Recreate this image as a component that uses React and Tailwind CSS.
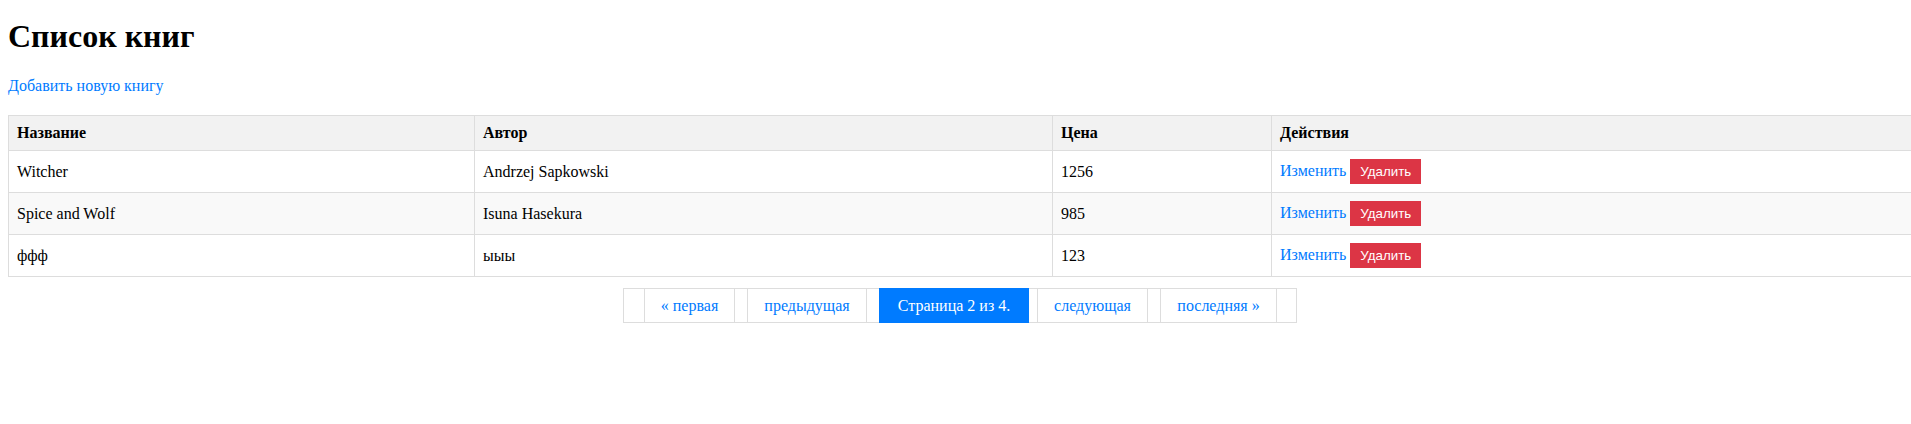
import React from "react"

const books = [
  { id: 1, title: "Witcher", author: "Andrzej Sapkowski", price: 1256 },
  { id: 2, title: "Spice and Wolf", author: "Isuna Hasekura", price: 985 },
  { id: 3, title: "ффф", author: "ыыы", price: 123 },
]

export default function App() {
  return (
    <div className="min-h-screen overflow-hidden bg-white text-black font-['Liberation_Serif','Times_New_Roman',serif] text-[16px] leading-[normal]">
      <div className="pl-2 pt-[18px]">
        <h1 className="text-[32px] font-bold leading-[normal] mb-[22px]">Список книг</h1>
        <div>
          <a href="#" className="text-[#007bff]">Добавить новую книгу</a>
        </div>

        {/* Books table */}
        <table className="mt-[20px] w-[1910px] table-fixed border-collapse">
          <colgroup>
            <col className="w-[466px]" />
            <col className="w-[578px]" />
            <col className="w-[219px]" />
            <col />
          </colgroup>
          <thead>
            <tr className="bg-[#f2f2f2]">
              <th className="border border-[#ddd] p-2 text-left font-bold">Название</th>
              <th className="border border-[#ddd] p-2 text-left font-bold">Автор</th>
              <th className="border border-[#ddd] p-2 text-left font-bold">Цена</th>
              <th className="border border-[#ddd] p-2 text-left font-bold">Действия</th>
            </tr>
          </thead>
          <tbody>
            {books.map((book, i) => (
              <tr key={book.id} className={i % 2 === 1 ? "bg-[#f9f9f9]" : "bg-white"}>
                <td className="border border-[#ddd] p-2">{book.title}</td>
                <td className="border border-[#ddd] p-2">{book.author}</td>
                <td className="border border-[#ddd] p-2">{book.price}</td>
                <td className="border border-[#ddd] p-2">
                  <a href="#" className="text-[#007bff]">Изменить</a>{" "}
                  <button className="bg-[#dc3545] text-white font-['Liberation_Sans',Arial,sans-serif] text-[13.333px] leading-[normal] px-[10px] py-[5px]">
                    Удалить
                  </button>
                </td>
              </tr>
            ))}
          </tbody>
        </table>
      </div>

      {/* Pagination */}
      <div className="mt-[11px] flex justify-center pl-[9px]">
        <div className="flex h-[35px] text-[#007bff]">
          <span className="w-[21px] border border-r-0 border-[#ddd]"></span>
          <a href="#" className="w-[90px] flex items-center justify-center border-y border-l border-[#ddd]">« первая</a>
          <span className="w-[13px] border-y border-l border-[#ddd]"></span>
          <a href="#" className="w-[119px] flex items-center justify-center border-y border-l border-[#ddd]">предыдущая</a>
          <span className="w-[13px] border-y border-l border-[#ddd]"></span>
          <span className="w-[150px] flex items-center justify-center bg-[#007bff] text-white">Страница 2 из 4.</span>
          <span className="w-[8px] border-y border-[#ddd]"></span>
          <a href="#" className="w-[110px] flex items-center justify-center border-y border-l border-[#ddd]">следующая</a>
          <span className="w-[13px] border-y border-l border-[#ddd]"></span>
          <a href="#" className="w-[116px] flex items-center justify-center border-y border-l border-[#ddd]">последняя »</a>
          <span className="w-[21px] border border-[#ddd]"></span>
        </div>
      </div>
    </div>
  )
}
